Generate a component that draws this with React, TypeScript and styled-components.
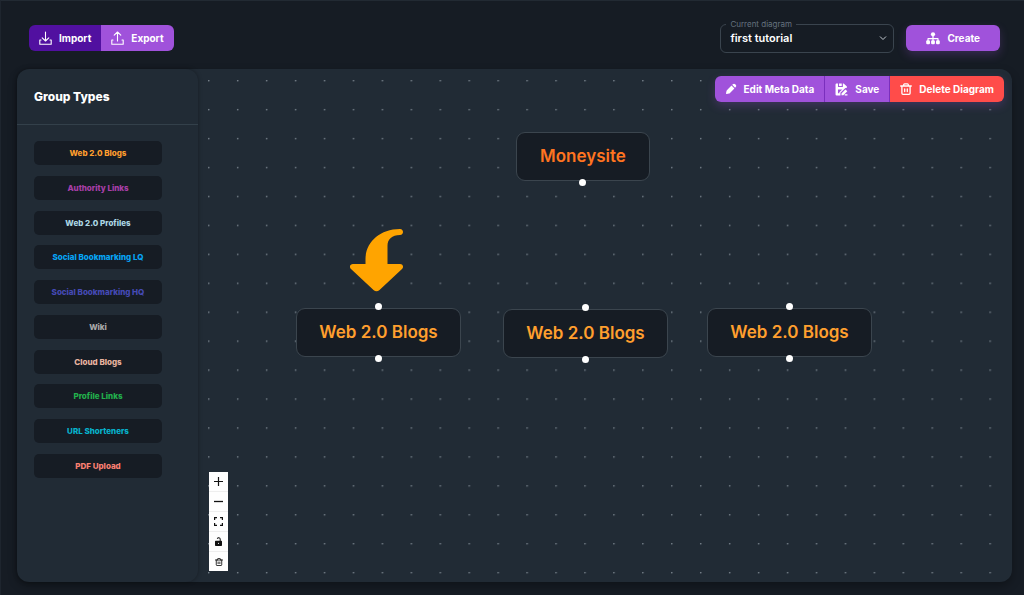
import React from 'react';
import styled, { createGlobalStyle, css } from 'styled-components';

const GlobalStyle = createGlobalStyle`
  *, *::before, *::after { box-sizing: border-box; }
  body { margin: 0; background: #161c24; }
  body, button, select { font-family: Inter, 'Liberation Sans', sans-serif; }
  button { border: 0; margin: 0; cursor: pointer; }
`;

const Page = styled.div`
  display: flex;
  flex-direction: column;
  min-height: 100vh;
  padding: 0 12px 13px 16px;
  border-top: 1px solid #222a33;
  border-left: 1px solid #1e252e;
  color: #fff;
`;

const Header = styled.header`
  display: flex;
  align-items: flex-end;
  justify-content: space-between;
  padding: 18px 12px;
`;

const HeaderActions = styled.div`
  display: flex;
  align-items: flex-end;
  gap: 12px;
`;

const ButtonGroup = styled.div`
  display: flex;
  border-radius: 6px;
  overflow: hidden;
`;

const tones = {
  deep: '#5110a0',
  purple: '#a052db',
  red: '#ff4c4a',
};

const ActionButton = styled.button<{ $tone: keyof typeof tones; $divided?: boolean; $wide?: boolean }>`
  display: flex;
  align-items: center;
  justify-content: center;
  gap: 7px;
  height: 26px;
  padding: 0 ${p => (p.$wide ? 20 : 10)}px;
  background: ${p => tones[p.$tone]};
  color: #fff;
  font-size: 10px;
  font-weight: 700;
  white-space: nowrap;
  ${p => p.$divided && css`border-right: 1px solid #7a2fbd;`}
  ${p => p.$wide && css`
    border-radius: 6px;
    box-shadow: 0 4px 10px rgba(160, 82, 219, 0.24);
  `}
  svg { flex: none; }
`;

const Field = styled.fieldset`
  width: 174px;
  min-width: 0;
  height: 34px;
  margin: 0 0 -2px;
  padding: 0;
  border: 1px solid #3a444e;
  border-radius: 6px;
`;

const FieldLegend = styled.legend`
  margin-left: 5px;
  padding: 0 4px;
  color: #65727f;
  font-size: 8px;
  line-height: 10px;
`;

const FieldRow = styled.div`
  display: flex;
  align-items: center;
  padding: 0 6px 0 9px;
`;

const DiagramSelect = styled.select`
  flex: 1;
  height: 18px;
  padding: 0;
  border: 0;
  appearance: none;
  background: transparent;
  color: #fff;
  font-size: 11px;
  font-weight: 600;
`;

const Panel = styled.main`
  display: flex;
  flex: 1;
  border-radius: 12px;
  background: #212b35;
  box-shadow: 0 4px 10px rgba(0, 0, 0, 0.3);
`;

const Sidebar = styled.aside`
  flex: none;
  width: 181px;
  border-radius: 12px;
  box-shadow: 0 0 4px rgba(0, 0, 0, 0.35);
`;

const SidebarTitle = styled.h2`
  margin: 0;
  padding: 18px 17px;
  border-bottom: 1px solid #33404a;
  font-size: 12px;
  font-weight: 800;
  line-height: 19px;
`;

const TypeList = styled.ul`
  display: flex;
  flex-direction: column;
  justify-content: space-between;
  height: 337px;
  margin: 16px 0;
  padding: 0 36px 0 17px;
  list-style: none;
`;

const TypeButton = styled.button<{ $color: string }>`
  display: block;
  width: 100%;
  height: 24px;
  padding: 0;
  border-radius: 5px;
  background: #161c24;
  color: ${p => p.$color};
  font-size: 8px;
  font-weight: 800;
`;

const Canvas = styled.section`
  position: relative;
  flex: 1;
  min-width: 0;
`;

const DotGrid = styled.svg`
  position: absolute;
  inset: 0;
  width: 100%;
  height: 100%;
`;

const Toolbar = styled(ButtonGroup)`
  position: absolute;
  top: 7px;
  right: 8px;
  overflow: visible;
  box-shadow: 0 4px 10px rgba(160, 82, 219, 0.24);
  & > :first-child { border-radius: 6px 0 0 6px; }
  & > :last-child { border-radius: 0 6px 6px 0; }
`;

const Node = styled.div<{ $x: number; $y: number; $width: number; $color: string }>`
  position: absolute;
  left: ${p => p.$x}px;
  top: ${p => p.$y}px;
  display: flex;
  align-items: center;
  justify-content: center;
  width: ${p => p.$width}px;
  height: 49px;
  padding-bottom: 2px;
  border: 1px solid #3b454e;
  border-radius: 9px;
  background: #161c24;
  color: ${p => p.$color};
  font-size: 17px;
  font-weight: 600;
`;

const Handle = styled.span<{ $side: 'top' | 'bottom' }>`
  position: absolute;
  ${p => p.$side}: -6px;
  left: calc(50% - 4px);
  width: 7px;
  height: 7px;
  border-radius: 50%;
  background: #fff;
`;

const Pointer = styled.svg`
  position: absolute;
  left: 152px;
  top: 160px;
`;

const Controls = styled.div`
  position: absolute;
  left: 11px;
  bottom: 11px;
  display: flex;
  flex-direction: column;
  gap: 1px;
  background: #eee;
`;

const ControlButton = styled.button`
  display: flex;
  align-items: center;
  justify-content: center;
  width: 19px;
  height: 19px;
  padding: 0;
  background: #fefefe;
  color: #111;
`;

const TrayIcon = ({ up }: { up?: boolean }) => (
  <svg width="13" height="14" viewBox="0 0 13 14" fill="none" stroke="currentColor" strokeWidth="1.1" strokeLinecap="round" strokeLinejoin="round">
    <path d="M2 9H.8v4.200h11.400V9H11" />
    <path d={up ? 'M6.500 10V1M3.200 4.200 6.500 1l3.300 3.200' : 'M6.500 1v9M3.200 6.800 6.500 10l3.300-3.200'} />
  </svg>
);

const SitemapIcon = () => (
  <svg width="14" height="13" viewBox="0 0 14 13" fill="currentColor">
    <circle cx="7" cy="2.3" r="2.1" />
    <path d="M6.4 4h1.2v2h4.2c.5 0 .8.3.8.8V9h-1.2V7.200H7.600V9H6.400V7.200H2.600V9H1.400V6.800c0-.5.3-.8.8-.8h4.200z" />
    <rect x="0.200" y="8.300" width="3.800" height="4" rx="1.200" />
    <rect x="5.100" y="8.300" width="3.800" height="4" rx="1.200" />
    <rect x="10" y="8.300" width="3.800" height="4" rx="1.200" />
  </svg>
);

const PenIcon = () => (
  <svg width="12" height="12" viewBox="0 0 12 12" fill="currentColor">
    <path d="M6.500 2.500 9.400 5.400 5 9.900c-.3.300-.6.500-1 .6l-2.200.5c-.5.100-.9-.3-.8-.8l.5-2.200c.1-.4.300-.7.600-1zM7.200 1.800l.6-.6c.7-.7 1.700-.7 2.400 0l.5.500c.7.700.7 1.700 0 2.400l-.6.600z" />
  </svg>
);

const SaveEditIcon = () => (
  <svg width="13" height="13" viewBox="0 0 24 24" fill="currentColor">
    <path d="M3 1h2.500v6.500h9V1H16l6 5.500V9c-1.500-.4-2.800 0-3.800 1L10 18.200V23H3a2 2 0 0 1-2-2V3c0-1.100.9-2 2-2zm4.500 0h5v4.500h-5zM5.500 12v7H8v-1.700l5.300-5.300z" fillRule="evenodd" />
    <path d="m12 19.200 7.300-7.300 3.400 3.400-7.300 7.300H12zM18 20.600h5V23h-5z" />
  </svg>
);

const TrashIcon = ({ size }: { size: number }) => (
  <svg width={size} height={size} viewBox="0 0 12 12" fill="none" stroke="currentColor" strokeWidth="1.300" strokeLinejoin="round" strokeLinecap="round">
    <path d="M.7 3h10.600M3.700 3V1.800c0-.6.300-1 .9-1h2.800c.6 0 .9.400.9 1V3M1.900 3v7.200c0 .7.400 1.100 1.100 1.100h6c.7 0 1.100-.4 1.100-1.100V3M4.700 6v2.500M7.300 6v2.500" />
  </svg>
);

const ChevronIcon = () => (
  <svg width="8" height="6" viewBox="0 0 8 6" fill="none" stroke="#c4cbd2" strokeWidth="1">
    <path d="m1 1.500 3 3 3-3" />
  </svg>
);

const groupTypes = [
  { name: 'Web 2.0 Blogs', color: '#ff9f2e' },
  { name: 'Authority Links', color: '#a83fa8' },
  { name: 'Web 2.0 Profiles', color: '#add8e6' },
  { name: 'Social Bookmarking LQ', color: '#06a5f5' },
  { name: 'Social Bookmarking HQ', color: '#454ab5' },
  { name: 'Wiki', color: '#a9a9a9' },
  { name: 'Cloud Blogs', color: '#e9b4a0' },
  { name: 'Profile Links', color: '#22b14c' },
  { name: 'URL Shorteners', color: '#06b3cc' },
  { name: 'PDF Upload', color: '#fa8072' },
];

const nodes = [
  { id: 'money', label: 'Moneysite', x: 318, y: 63, width: 134, color: '#ff7420', top: false },
  { id: 'web-1', label: 'Web 2.0 Blogs', x: 98, y: 239, width: 165, color: '#ff9f2e', top: true },
  { id: 'web-2', label: 'Web 2.0 Blogs', x: 305, y: 240, width: 165, color: '#ff9f2e', top: true },
  { id: 'web-3', label: 'Web 2.0 Blogs', x: 509, y: 239, width: 165, color: '#ff9f2e', top: true },
];

export default function App() {
  return (
    <>
      <GlobalStyle />
      <Page>
        <Header>
          <ButtonGroup>
            <ActionButton $tone="deep"><TrayIcon />Import</ActionButton>
            <ActionButton $tone="purple"><TrayIcon up />Export</ActionButton>
          </ButtonGroup>
          <HeaderActions>
            <Field>
              <FieldLegend><label htmlFor="diagram">Current diagram</label></FieldLegend>
              <FieldRow>
                <DiagramSelect id="diagram"><option>first tutorial</option></DiagramSelect>
                <ChevronIcon />
              </FieldRow>
            </Field>
            <ActionButton $tone="purple" $wide><SitemapIcon />Create</ActionButton>
          </HeaderActions>
        </Header>
        <Panel>
          <Sidebar>
            <SidebarTitle>Group Types</SidebarTitle>
            <TypeList>
              {groupTypes.map(t => (
                <li key={t.name}><TypeButton $color={t.color}>{t.name}</TypeButton></li>
              ))}
            </TypeList>
          </Sidebar>
          <Canvas>
            <DotGrid aria-hidden="true">
              <defs>
                <pattern id="dots" x="10" y="11" width="28.940" height="28.940" patternUnits="userSpaceOnUse">
                  <circle cx="0.800" cy="0.800" r="0.800" fill="#87929b" />
                </pattern>
              </defs>
              <rect width="100%" height="100%" fill="url(#dots)" />
            </DotGrid>
            {nodes.map(n => (
              <Node key={n.id} $x={n.x} $y={n.y} $width={n.width} $color={n.color}>
                {n.top && <Handle $side="top" />}
                {n.label}
                <Handle $side="bottom" />
              </Node>
            ))}
            <Pointer width="54" height="63" viewBox="0 0 54 63" fill="#ffa400" aria-hidden="true">
              <path d="M50 0C29 0 15.500 14 15.500 30v5H3c-3 0-4 3-2 5l22.500 21c2 1.800 4 1.800 6 0L52 40c2-2 1-5-2-5H37.500V17C37.500 10 42 6 50 6c4 0 4-6 0-6z" />
            </Pointer>
            <Toolbar>
              <ActionButton $tone="purple" $divided><PenIcon />Edit Meta Data</ActionButton>
              <ActionButton $tone="purple" $divided><SaveEditIcon />Save</ActionButton>
              <ActionButton $tone="red"><TrashIcon size={12} />Delete Diagram</ActionButton>
            </Toolbar>
            <Controls>
              <ControlButton aria-label="Zoom in">
                <svg width="9" height="9" viewBox="0 0 9 9" stroke="currentColor" strokeWidth="1.200"><path d="M4.500 0v9M0 4.500h9" /></svg>
              </ControlButton>
              <ControlButton aria-label="Zoom out">
                <svg width="9" height="9" viewBox="0 0 9 9" stroke="currentColor" strokeWidth="1.300"><path d="M0 4.500h9" /></svg>
              </ControlButton>
              <ControlButton aria-label="Fit view">
                <svg width="9" height="9" viewBox="0 0 9 9" fill="none" stroke="currentColor" strokeWidth="1.200"><path d="M.6 3V.6H3M6 .6h2.400V3M8.400 6v2.400H6M3 8.400H.6V6" /></svg>
              </ControlButton>
              <ControlButton aria-label="Toggle lock">
                <svg width="7" height="9" viewBox="0 0 7 9" fill="currentColor"><path d="M.7 3.700h4V2.200c0-1.200-1.700-1.300-2.100-.3l-.8-.4C2.600-.5 5.700-.2 5.700 2.200v1.500h.6c.4 0 .7.300.7.700v3.900c0 .4-.3.700-.7.700H.7C.3 9 0 8.700 0 8.300V4.400c0-.4.300-.7.700-.7zM3.500 5.700a.6.600 0 1 0 0 1.200.6.600 0 0 0 0-1.200z" /></svg>
              </ControlButton>
              <ControlButton aria-label="Clear canvas"><TrashIcon size={8} /></ControlButton>
            </Controls>
          </Canvas>
        </Panel>
      </Page>
    </>
  );
}
